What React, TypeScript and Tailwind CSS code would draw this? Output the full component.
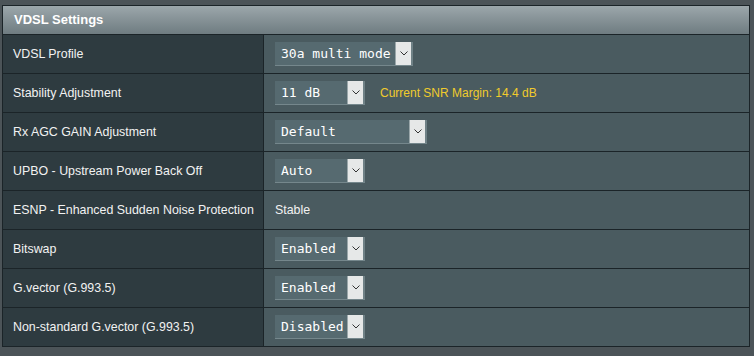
import React from "react";

type Row = {
  label: string;
  value?: string;
  width?: number;
  text?: string;
  note?: string;
};

const rows: Row[] = [
  { label: "VDSL Profile", value: "30a multi mode", width: 138 },
  { label: "Stability Adjustment", value: "11 dB", width: 90, note: "Current SNR Margin: 14.4 dB" },
  { label: "Rx AGC GAIN Adjustment", value: "Default", width: 152 },
  { label: "UPBO - Upstream Power Back Off", value: "Auto", width: 90 },
  { label: "ESNP - Enhanced Sudden Noise Protection", text: "Stable" },
  { label: "Bitswap", value: "Enabled", width: 90 },
  { label: "G.vector (G.993.5)", value: "Enabled", width: 90 },
  { label: "Non-standard G.vector (G.993.5)", value: "Disabled", width: 90 },
];

function Select({ value, width }: { value: string; width: number }) {
  return (
    <div
      className="flex h-[24px] items-stretch bg-[#566a70] border-b border-[#75878c]"
      style={{ width }}
    >
      <div
        className="flex-1 flex items-center pl-[6px] text-white text-[13px] leading-none whitespace-nowrap overflow-hidden"
        style={{ fontFamily: '"DejaVu Sans Mono", "Liberation Mono", monospace' }}
      >
        {value}
      </div>
      <div className="w-[18px] flex items-center justify-center bg-[#e6e8e8] border-l border-[#9aa7aa] border-r-2 border-r-[#6f8186]">
        <svg width="8" height="5" viewBox="0 0 8 5">
          <path d="M0.5 0.5 L4 4 L7.5 0.5" fill="none" stroke="#333" strokeWidth="1" />
        </svg>
      </div>
    </div>
  );
}

export default function App() {
  return (
    <div
      className="w-[754px] h-[356px] bg-[#4c5458] pt-[5px] pl-[2px]"
      style={{ fontFamily: '"Liberation Sans", Arial, sans-serif' }}
    >
      <div className="w-[748px] border-l border-r border-t border-[#1b2428]">
        <div className="h-[29px] flex items-center pl-[11px] border-b border-[#1b2428] bg-gradient-to-b from-[#9ca7ab] to-[#6f7c81]">
          <span className="text-white font-bold text-[13px]">VDSL Settings</span>
        </div>
        {rows.map((r) => (
          <div key={r.label} className="grid grid-cols-[261px_1fr] h-[39px] border-b border-[#1b2428]">
            <div className="bg-[#2e3b40] border-r border-[#1b2428] flex items-center pl-[10px] text-[12.4px] text-[#f2f2f2] whitespace-nowrap">
              {r.label}
            </div>
            <div className="bg-[#4a5b60] flex items-center pl-[11px] text-[12.4px] text-[#f2f2f2]">
              {r.value && r.width ? <Select value={r.value} width={r.width} /> : null}
              {r.text ? <span>{r.text}</span> : null}
              {r.note ? (
                <span className="ml-[15px] text-[12px] text-[#f0cb2c]">{r.note}</span>
              ) : null}
            </div>
          </div>
        ))}
      </div>
    </div>
  );
}
